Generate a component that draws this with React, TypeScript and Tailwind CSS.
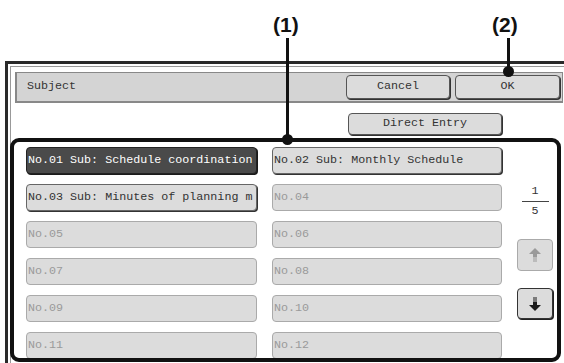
import React from 'react';

const mono = { fontFamily: '"Liberation Mono", "DejaVu Sans Mono", monospace' };

type BtnKind = 'selected' | 'active' | 'disabled';

function ListButton({ label, kind }: { label: string; kind: BtnKind }) {
  const styles: Record<BtnKind, string> = {
    selected: 'bg-[#4a4a4a] text-white border-[#222] shadow-[1px_1px_0_#1a1a1a]',
    active: 'bg-[#dcdcdc] text-[#333] border-[#666] shadow-[1px_1px_0_#333]',
    disabled: 'bg-[#dcdcdc] text-[#9a9a9a] border-[#aaa]',
  };
  return (
    <div className={`h-[27px] rounded-[4px] border flex items-center pl-[1px] overflow-hidden whitespace-nowrap text-[11.7px] ${styles[kind]}`}>
      {label}
    </div>
  );
}

function ArrowIcon({ dir, color }: { dir: 'up' | 'down'; color: string }) {
  return (
    <svg width="12" height="14" viewBox="0 0 12 14" className={dir === 'up' ? 'rotate-180' : ''}>
      <rect x="4" y="0.5" width="4" height="1" fill={color} />
      <rect x="4" y="2.5" width="4" height="1" fill={color} />
      <rect x="4" y="4.5" width="4" height="3.5" fill={color} />
      <polygon points="0,8 12,8 6,14" fill={color} />
    </svg>
  );
}

const rows: [string, BtnKind, string, BtnKind][] = [
  ['No.01 Sub: Schedule coordination', 'selected', 'No.02 Sub: Monthly Schedule', 'active'],
  ['No.03 Sub: Minutes of planning m', 'active', 'No.04', 'disabled'],
  ['No.05', 'disabled', 'No.06', 'disabled'],
  ['No.07', 'disabled', 'No.08', 'disabled'],
  ['No.09', 'disabled', 'No.10', 'disabled'],
  ['No.11', 'disabled', 'No.12', 'disabled'],
];

const labelFont = { fontFamily: '"Liberation Sans", Arial, sans-serif' };

export default function App() {
  return (
    <div className="relative w-[564px] h-[363px] bg-white overflow-hidden" style={mono}>
      {/* screen frame */}
      <div className="mt-[61px] ml-[5px] w-[620px] h-[320px] border-[3px] border-[#2a2a2a] p-[2px]">
        <div className="h-full border border-[#999] pl-[4px] pt-[5px]">
          <div className="w-[548px] h-[31px] bg-[#d4d4d4] border border-[#888] border-l-2 border-b-2 flex items-center pl-[10px] pr-[2px]">
            <span className="text-[11.7px] text-[#333]">Subject</span>
            <div className="ml-auto flex gap-[5px]">
              <div className="w-[104px] h-[24px] rounded-[4px] border border-[#555] bg-[#dcdcdc] shadow-[1px_1px_0_#333] flex items-center justify-center text-[11.7px] text-[#333]">Cancel</div>
              <div className="w-[105px] h-[24px] rounded-[4px] border border-[#555] bg-[#dcdcdc] shadow-[1px_1px_0_#333] flex items-center justify-center text-[11.7px] text-[#333]">OK</div>
            </div>
          </div>

          <div className="ml-[333px] mt-[10px] w-[154px] h-[22px] rounded-[4px] border border-[#555] bg-[#dcdcdc] shadow-[1px_1px_0_#333] flex items-center justify-center text-[11.7px] text-[#333]">
            Direct Entry
          </div>

          <div className="ml-[11px] mt-[12px] flex gap-[15px]">
            <div className="grid grid-cols-[231px_230px] gap-x-[15px] gap-y-[10px]">
              {rows.map(([l, lk, r, rk]) => (
                <React.Fragment key={l}>
                  <ListButton label={l} kind={lk} />
                  <ListButton label={r} kind={rk} />
                </React.Fragment>
              ))}
            </div>
            <div className="w-[36px] flex flex-col items-center">
              <div className="mt-[38px] flex flex-col items-center text-[11.7px] text-[#333] leading-[13px]">
                <span>1</span>
                <div className="w-[27px] h-px bg-[#444] my-[3px]" />
                <span>5</span>
              </div>
              <div className="mt-[21px] w-[36px] h-[32px] rounded-[4px] border border-[#aaa] bg-[#dcdcdc] flex items-center justify-center">
                <ArrowIcon dir="up" color="#9a9a9a" />
              </div>
              <div className="mt-[17px] w-[36px] h-[31px] rounded-[4px] border border-[#333] bg-[#dcdcdc] shadow-[1px_1px_0_#222] flex items-center justify-center">
                <ArrowIcon dir="down" color="#1a1a1a" />
              </div>
            </div>
          </div>
        </div>
      </div>

      {/* callout (1) */}
      <div className="absolute left-[273px] top-[14px] text-[21px] leading-none font-bold text-[#111]" style={labelFont}>(1)</div>
      <div className="absolute left-[286px] top-[38px] w-[3px] h-[102px] bg-[#111]" />
      <div className="absolute left-[282px] top-[134px] w-[11px] h-[11px] rounded-full bg-[#111]" />
      <div className="absolute left-[10px] top-[138px] w-[551px] h-[224px] border-[4px] border-[#111] rounded-[9px]" />

      {/* callout (2) */}
      <div className="absolute left-[492px] top-[14px] text-[21px] leading-none font-bold text-[#111]" style={labelFont}>(2)</div>
      <div className="absolute left-[507px] top-[38px] w-[3px] h-[32px] bg-[#111]" />
      <div className="absolute left-[503px] top-[66px] w-[11px] h-[11px] rounded-full bg-[#111]" />
    </div>
  );
}
